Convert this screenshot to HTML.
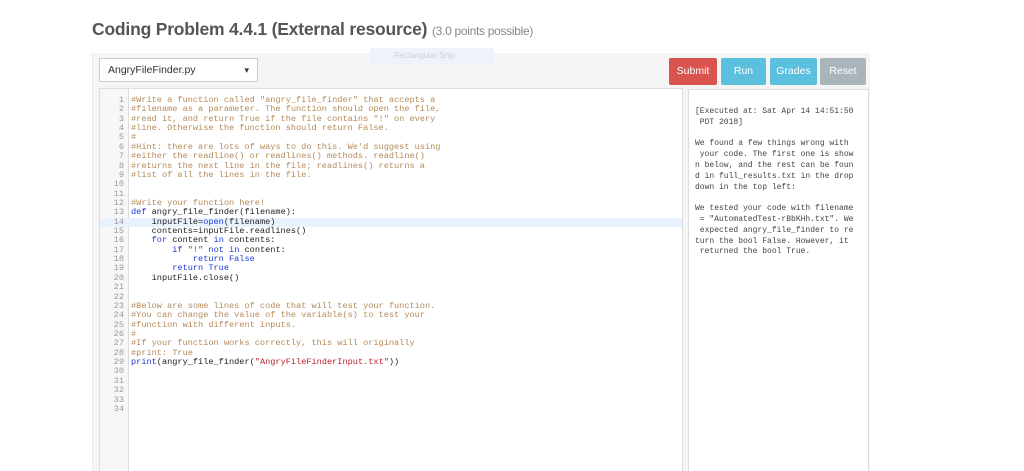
<!DOCTYPE html>
<html><head><meta charset="utf-8"><style>
html,body{margin:0;width:1024px;height:471px;overflow:hidden}
body{background:#fff;position:relative;font-family:"Liberation Sans",sans-serif}
.title{position:absolute;left:92px;top:19px;font-size:17.5px;color:#555;font-weight:bold;letter-spacing:-0.2px}
.title small{font-size:12px;font-weight:normal;color:#888;letter-spacing:-0.3px}
.panel{position:absolute;left:92px;top:53px;width:777px;height:418px;background:#f5f5f5;border-left:1px solid #e8e8e8}
.snip{position:absolute;left:370px;top:48px;width:124px;height:16px;background:#eef3fb;font-size:8px;color:#c8cfe0;padding-left:24px;box-sizing:border-box;line-height:16px}
.sel{position:absolute;left:99px;top:58px;width:159px;height:24px;background:#fff;border:1px solid #ccc;box-sizing:border-box;font-size:10.5px;color:#333;line-height:22px;padding-left:8px}
.sel:after{content:"▾";position:absolute;right:8px;top:0;font-size:9px}
.btn{position:absolute;top:58px;height:27px;color:#fff;font-size:10.5px;line-height:27px;text-align:center;border-radius:2px}
.ed{position:absolute;left:99px;top:88px;width:584px;height:390px;background:#fff;border:1px solid #ddd;box-sizing:border-box;overflow:hidden}
.gut{position:absolute;left:0;top:0;width:28px;height:100%;background:#f7f7f7;border-right:1px solid #ddd}
.code{position:absolute;left:0;top:7px;font-family:"Liberation Mono",monospace;font-size:8.6px;line-height:9.36px;width:582px}
.l{height:9.36px;white-space:pre}
.ln{display:inline-block;width:24px;text-align:right;color:#999;margin-right:7px}
.hl{background:#e8f2ff}
.c{color:#b58a5a}.k{color:#1f3bd8}.s{color:#b8222a}.t{color:#222}
.out{position:absolute;left:688px;top:89px;width:181px;height:390px;background:#fff;border:1px solid #ddd;box-sizing:border-box}
.otext{position:absolute;left:6px;top:17px;font-family:"Liberation Mono",monospace;font-size:8px;line-height:10.8px;white-space:pre;color:#444}
</style></head><body>
<div class="title">Coding Problem 4.4.1 (External resource) <small>(3.0 points possible)</small></div>
<div class="panel"></div>
<div class="snip">Rectangular Snip</div>
<div class="sel">AngryFileFinder.py</div>
<div class="btn" style="left:669px;width:48px;background:#d9534f">Submit</div>
<div class="btn" style="left:721px;width:45px;background:#5bc0de">Run</div>
<div class="btn" style="left:770px;width:47px;background:#5bc0de">Grades</div>
<div class="btn" style="left:820px;width:46px;background:#aab4bb">Reset</div>
<div class="ed"><div class="gut"></div><div class="code"><div class="l"><span class="ln">1</span><span class="c">#Write a function called "angry_file_finder" that accepts a</span></div><div class="l"><span class="ln">2</span><span class="c">#filename as a parameter. The function should open the file,</span></div><div class="l"><span class="ln">3</span><span class="c">#read it, and return True if the file contains "!" on every</span></div><div class="l"><span class="ln">4</span><span class="c">#line. Otherwise the function should return False.</span></div><div class="l"><span class="ln">5</span><span class="c">#</span></div><div class="l"><span class="ln">6</span><span class="c">#Hint: there are lots of ways to do this. We'd suggest using</span></div><div class="l"><span class="ln">7</span><span class="c">#either the readline() or readlines() methods. readline()</span></div><div class="l"><span class="ln">8</span><span class="c">#returns the next line in the file; readlines() returns a</span></div><div class="l"><span class="ln">9</span><span class="c">#list of all the lines in the file.</span></div><div class="l"><span class="ln">10</span></div><div class="l"><span class="ln">11</span></div><div class="l"><span class="ln">12</span><span class="c">#Write your function here!</span></div><div class="l"><span class="ln">13</span><span class="k">def</span><span class="t"> angry_file_finder(filename):</span></div><div class="l hl"><span class="ln">14</span><span class="t">    inputFile=</span><span class="k">open</span><span class="t">(filename)</span></div><div class="l"><span class="ln">15</span><span class="t">    contents=inputFile.readlines()</span></div><div class="l"><span class="ln">16</span><span class="k">    for</span><span class="t"> content </span><span class="k">in</span><span class="t"> contents:</span></div><div class="l"><span class="ln">17</span><span class="k">        if</span> <span class="s">"!"</span> <span class="k">not in</span><span class="t"> content:</span></div><div class="l"><span class="ln">18</span><span class="k">            return False</span></div><div class="l"><span class="ln">19</span><span class="k">        return True</span></div><div class="l"><span class="ln">20</span><span class="t">    inputFile.close()</span></div><div class="l"><span class="ln">21</span></div><div class="l"><span class="ln">22</span></div><div class="l"><span class="ln">23</span><span class="c">#Below are some lines of code that will test your function.</span></div><div class="l"><span class="ln">24</span><span class="c">#You can change the value of the variable(s) to test your</span></div><div class="l"><span class="ln">25</span><span class="c">#function with different inputs.</span></div><div class="l"><span class="ln">26</span><span class="c">#</span></div><div class="l"><span class="ln">27</span><span class="c">#If your function works correctly, this will originally</span></div><div class="l"><span class="ln">28</span><span class="c">#print: True</span></div><div class="l"><span class="ln">29</span><span class="k">print</span><span class="t">(angry_file_finder(</span><span class="s">"AngryFileFinderInput.txt"</span><span class="t">))</span></div><div class="l"><span class="ln">30</span></div><div class="l"><span class="ln">31</span></div><div class="l"><span class="ln">32</span></div><div class="l"><span class="ln">33</span></div><div class="l"><span class="ln">34</span></div></div></div>
<div class="out"><div class="otext">[Executed at: Sat Apr 14 14:51:50
 PDT 2018]

We found a few things wrong with
 your code. The first one is show
n below, and the rest can be foun
d in full_results.txt in the drop
down in the top left:

We tested your code with filename
 = "AutomatedTest-rBbKHh.txt". We
 expected angry_file_finder to re
turn the bool False. However, it
 returned the bool True.</div></div>
</body></html>
